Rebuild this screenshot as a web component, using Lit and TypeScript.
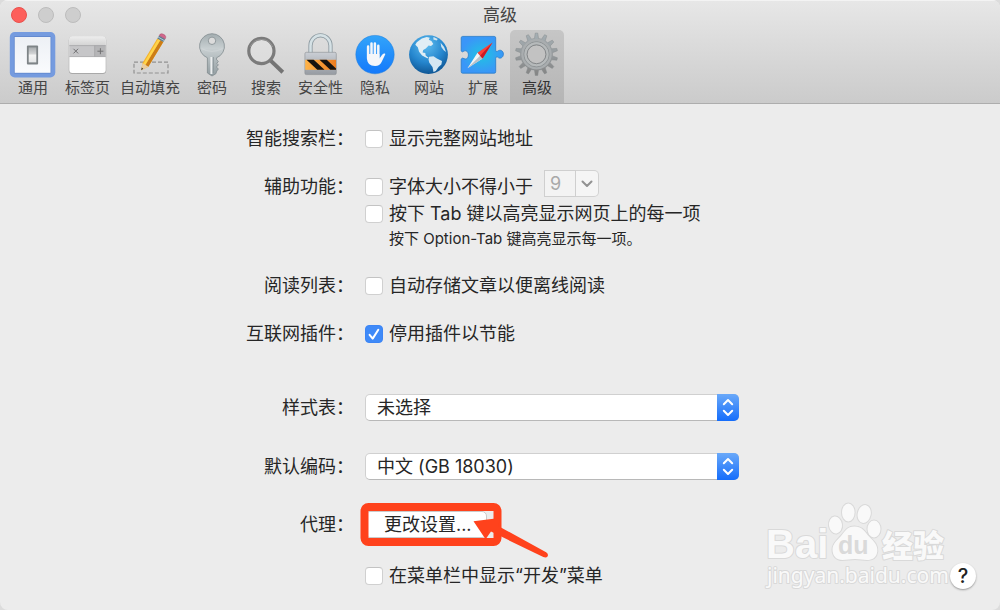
import { LitElement, html, css, svg, TemplateResult } from "lit";
import { customElement, property, state } from "lit/decorators.js";
import { classMap } from "lit/directives/class-map.js";

/** Outline of a toothed wheel, as path data. */
function gearPath(cx: number, cy: number, outer: number, inner: number, teeth: number): string {
  const step = (Math.PI * 2) / teeth;
  const pts: string[] = [];
  for (let i = 0; i < teeth; i++) {
    const a = i * step - Math.PI / 2;
    const spots: [number, number][] = [
      [inner, a - step * 0.28],
      [outer, a - step * 0.13],
      [outer, a + step * 0.13],
      [inner, a + step * 0.28],
    ];
    for (const [r, t] of spots) {
      pts.push(`${(cx + r * Math.cos(t)).toFixed(2)} ${(cy + r * Math.sin(t)).toFixed(2)}`);
    }
  }
  return `M${pts.join("L")}Z`;
}

const icons: Record<string, TemplateResult> = {
  general: svg`
    <defs><linearGradient id="g" x1="0" y1="0" x2="0" y2="1"><stop offset="0" stop-color="#edf0f5"/><stop offset="1" stop-color="#fafbfd"/></linearGradient>
    <linearGradient id="s" x1="0" y1="0" x2="0" y2="1"><stop offset="0" stop-color="#a9adb0"/><stop offset=".45" stop-color="#d5d7d8"/><stop offset=".5" stop-color="#f4f4f4"/><stop offset="1" stop-color="#e4e6e7"/></linearGradient></defs>
    <rect x="3.8" y="2" width="45.5" height="45.5" rx="5" fill="#759bdf"/>
    <rect x="7.9" y="6.2" width="37.3" height="37.3" rx="1" fill="#5d84ca"/>
    <rect x="8.7" y="7" width="35.8" height="35.8" fill="url(#g)"/>
    <rect x="20.9" y="15.6" width="11.2" height="18.8" rx="1" fill="#7e8487"/>
    <rect x="22.7" y="17.4" width="7.6" height="15" fill="url(#s)"/>`,
  tabs: svg`
    <defs><linearGradient id="t" x1="0" y1="0" x2="0" y2="1"><stop offset="0" stop-color="#ececec"/><stop offset="1" stop-color="#d3d3d3"/></linearGradient></defs>
    <rect x="7.8" y="7" width="37.4" height="37" rx="3.4" fill="#a9a9a9"/>
    <rect x="8.3" y="6.8" width="36.4" height="36.2" rx="3" fill="#fff"/>
    <path d="M8.300 15.6V10q0-3.200 3-3.200h30.4q3 0 3 3.200v5.600z" fill="url(#t)"/>
    <path d="M8.3 15.6h36.4v11H8.3z" fill="#c6c6c8"/><path d="M33.700 15.6h11v11h-11z" fill="#b5b5b7"/>
    <path d="M8.3 15.6h36.4M8.3 26.6h36.4M33.700 15.6v11" stroke="#a2a2a4" stroke-width=".8"/>
    <path d="M12.500 18.8l4.6 4.6m0-4.6l-4.6 4.6M36.4 21.2h6m-3-3v6" stroke="#707072" stroke-width="1" fill="none"/>`,
  autofill: svg`
    <rect x="11" y="32.2" width="34" height="10.8" fill="none" stroke="#929292" stroke-width="1.2" stroke-dasharray="4 2"/>
    <path d="M18.2 40.2l1.3-7.2L34.3 8.4l6 3.5-15 24.8z" fill="#f5b32c"/>
    <path d="M22.4 34.9L37.4 10.2l2.9 1.7-15 24.8z" fill="#cc7d17"/>
    <path d="M20.4 33.8L35.2 9.1l2 1.2-14.9 24.6z" fill="#ffd44a"/>
    <path d="M18.2 40.2l1.3-7.2 5.8 3.7z" fill="#e9cda0"/><path d="M18.2 40.2l.5-2.6 1.6 1.1z" fill="#333"/>
    <path d="M34.3 8.4l1.9-3 6 3.5-1.9 3z" fill="#5e7f91"/><path d="M35.1 7l6 3.5" stroke="#b6cbd5"/>
    <path d="M36.2 5.4c1.2-2 3-1.9 4.8-.8 1.7 1 2.3 2.4 1.2 4.3z" fill="#d1688c" stroke="#a94a6c" stroke-width=".5"/>`,
  passwords: svg`
    <defs><linearGradient id="k" x1="0" y1="0" x2="0" y2="1"><stop offset="0" stop-color="#a3adb0"/><stop offset=".35" stop-color="#c8cfd1"/><stop offset="1" stop-color="#929da1"/></linearGradient></defs>
    <path d="M27 3.7a12.5 12.5 0 0 1 4.600 24.100v2l1.800 1.700-1.600 1.800 1.600 1.600-2 2.100 2 2-1.600 2-1 2.800-3.800 2.200-4.600-3V27.800A12.500 12.500 0 0 1 27 3.700zm0 3.400a3.700 3.700 0 1 0 0 7.400 3.700 3.700 0 0 0 0-7.400z" fill="url(#k)" stroke="#818b8f" stroke-width=".8"/>
    <path d="M26.4 27v17" stroke="#eceeef" stroke-width="2"/><path d="M28.3 27v16" stroke="#899397" stroke-width=".9"/>
    <path d="M16.6 18.7Q27 24 37.4 18.7" stroke="#d9dedf" stroke-width=".8" fill="none" opacity=".6"/>`,
  search: svg`
    <path d="M31.4 30.4l12.4 11.8" stroke="#747474" stroke-width="4"/>
    <circle cx="22.4" cy="21" r="12.6" fill="#e2e2e2" fill-opacity=".55" stroke="#7b7b7b" stroke-width="3.2"/>
    <path d="M11 17a12.4 12.4 0 0 1 22.8 0" stroke="#959595" stroke-width="1" fill="none"/>`,
  security: svg`
    <defs><linearGradient id="l" x1="0" y1="0" x2="0" y2="1"><stop offset="0" stop-color="#cbcfd5"/><stop offset="1" stop-color="#969ba2"/></linearGradient>
    <linearGradient id="o"><stop offset="0" stop-color="#ffb449"/><stop offset="1" stop-color="#ed7d20"/></linearGradient></defs>
    <path d="M16.5 23v-7.5a10 10.2 0 0 1 20 0V23" fill="none" stroke="#8e9ba2" stroke-width="4.2"/>
    <path d="M16.5 23v-7.5a10 10.2 0 0 1 20 0V23" fill="none" stroke="#d5e1e5" stroke-width="2.5"/>
    <rect x="10.9" y="22.3" width="31.4" height="22.3" rx="1.5" fill="url(#l)" stroke="#898d92" stroke-width=".6"/>
    <path d="M11.2 29.8h30.8v10H11.2z" fill="url(#o)"/>
    <path d="M12.500 29.8h7.200l10.800 10h-7.200zM25.500 29.8h7.200l9.300 8.600v1.400h-5.700z" fill="#17130f"/>`,
  privacy: svg`
    <defs><linearGradient id="p" x1="0" y1="0" x2="0" y2="1"><stop offset="0" stop-color="#32a4fa"/><stop offset="1" stop-color="#1479fb"/></linearGradient></defs>
    <circle cx="27" cy="24.6" r="19.2" fill="url(#p)" stroke="#1b7ddd" stroke-width=".5"/>
    <g fill="#f4f6fa" stroke="#f4f6fa" stroke-linecap="round"><path d="M20.1 16.4v12M23.5 13.4v14M26.9 13.4v14M30.3 15.8v12" stroke-width="2.5"/>
    <path d="M19 24h12.4v4.6c1.7-1.8 2.6-4.4 4.5-5 1-.3 1.6.2 1.3 1L33.6 32c-1.3 2.5-3.2 4.1-6.5 4.1-5.2 0-8.1-2.7-8.1-8z" stroke="none"/></g>`,
  websites: svg`
    <defs><radialGradient id="w" cx=".45" cy=".25" r=".75"><stop offset="0" stop-color="#5fbdf0"/><stop offset=".6" stop-color="#2586ce"/><stop offset="1" stop-color="#105795"/></radialGradient></defs>
    <circle cx="26.5" cy="24.6" r="19.4" fill="url(#w)"/>
    <path d="M14.8 12.2l5-3.8 5-1.5 3 .8-1 2 2.6 1.2 1.9 3-2.3 2.2-2.4-.6-2.8 3-2.6 1.4-.6 2.5 2.7.6.4 2.5 3 2.4-1.4.3-5.2-2.8-3-3.7-1.3-4.5-2.5-2.5z" fill="#e1eef5"/>
    <path d="M27.2 26.8l4.3-.5 3.4 2.1 5.1 2.6-.6 3.4-2.9 2.5-2.7 4.2-2.3 1-1-5.1-3.2-4.3-.8-3.2z" fill="#d5e7f2"/>
    <path d="M38.6 12.8l3.5 4.1 2 5.1-2.4-1.7-2.4-3.4zM31.5 7.1l4.2 2-1 1.5-3.4-1.2z" fill="#cfe4f0"/>`,
  extensions: svg`
    <defs><radialGradient id="e"><stop offset="0" stop-color="#20c3e2"/><stop offset="1" stop-color="#3a96f8"/></radialGradient></defs>
    <path d="M6.7 6.4h31.5q1.5 0 1.5 1.5v12.4q0 2 2 .9c2.2-2.1 5.7-.6 5.7 2.9s-3.5 5.3-5.7 3q-2-1-2 1.2v13.4q0 1.5-1.500 1.500H6.700q-1.500 0-1.500-1.500V29.100q1.200-1.700 2.800-.5c2.500 1.400 4.400-.8 4.400-3.800s-2.300-5-4.700-3.500q-1.700 1.300-2.500-.4v-13q0-1.500 1.500-1.500z" fill="url(#e)" stroke="#277bc8" stroke-width=".8"/>
    <path d="M11.5 38.2l10-15.4 5.1 5.6z" fill="#f4f4f4"/><path d="M11.5 38.2l12.6-12.4 2.5 2.6z" fill="#b7c1c8"/>
    <path d="M36.5 12.6L21.5 22.8l5.1 5.6z" fill="#ff4038"/><path d="M36.5 12.6L24.1 25.7l2.5 2.7z" fill="#c91c24"/>`,
  advanced: svg`
    <defs><linearGradient id="a" x1="0" y1="0" x2="0" y2="1"><stop offset="0" stop-color="#a6b0b5"/><stop offset="1" stop-color="#848484"/></linearGradient></defs>
    <path d=${gearPath(26.5, 24.3, 21.2, 16, 14)} fill="url(#a)" stroke="#858a8d" stroke-width=".5" stroke-linejoin="round"/>
    <circle cx="26.5" cy="24.3" r="15.2" fill="#a9adaf"/>
    <circle cx="26.5" cy="24.3" r="12.6" fill="none" stroke="#8f9496" stroke-width="1"/>
    <circle cx="26.5" cy="24.3" r="11" fill="none" stroke="#b6babb" stroke-width="2"/>
    <circle cx="26.5" cy="24.3" r="9.4" fill="#c2c2c2" stroke="#85888a" stroke-width="1"/>`,
};

const tools: [string, string][] = [
  ["general", "通用"],
  ["tabs", "标签页"],
  ["autofill", "自动填充"],
  ["passwords", "密码"],
  ["search", "搜索"],
  ["security", "安全性"],
  ["privacy", "隐私"],
  ["websites", "网站"],
  ["extensions", "扩展"],
  ["advanced", "高级"],
];

@customElement("tool-button")
export class ToolButton extends LitElement {
  @property() icon = "";
  @property() label = "";
  @property({ type: Boolean }) current = false;

  static styles = css`
    :host { display: block; }
    .tool {
      display: flex;
      flex-direction: column;
      align-items: center;
      box-sizing: border-box;
      min-width: 54px;
      height: 73px;
      padding: 0 5px;
      border: 0;
      border-radius: 5px 5px 0 0;
      background: none;
      color: #454545;
      font: 15px/20px "Inter", "Noto Sans CJK SC", sans-serif;
      white-space: nowrap;
    }
    .current { background: linear-gradient(#c6c6c6, #b5b5b5); color: #333; }
    .icon { display: block; width: 54px; height: 48px; margin: 0 -5px; flex: none; }
  `;

  render() {
    return html`<button class=${classMap({ tool: true, current: this.current })} aria-pressed=${this.current}>
      <svg class="icon" viewBox="0 0 54 48" aria-hidden="true">${icons[this.icon]}</svg>
      <span>${this.label}</span>
    </button>`;
  }
}

@customElement("check-option")
export class CheckOption extends LitElement {
  @property() label = "";
  @property({ type: Boolean }) checked = false;

  static styles = css`
    :host { display: block; }
    .option { display: flex; align-items: center; gap: 6px; line-height: 27px; white-space: nowrap; }
    .mark { display: grid; flex: none; }
    .mark > * { grid-area: 1 / 1; }
    .box {
      appearance: none;
      width: 18px;
      height: 18px;
      margin: 0;
      border: 1px solid #d0d0d0;
      border-top-color: #c3c3c3;
      border-radius: 4px;
      background: #fff;
    }
    .box:checked { border-color: #3c85f5; background: #3f8af8; }
    .tick { width: 18px; height: 18px; pointer-events: none; visibility: hidden; }
    .box:checked + .tick { visibility: visible; }
  `;

  render() {
    return html`<label class="option">
      <span class="mark">
        <input class="box" type="checkbox" .checked=${this.checked} />
        <svg class="tick" viewBox="0 0 18 18" aria-hidden="true"><path d="M4.6 9.8l3.1 3.8 5.6-8.8" fill="none" stroke="#fff" stroke-width="2" stroke-linecap="round" stroke-linejoin="round"/></svg>
      </span>
      <span>${this.label}</span>
    </label>`;
  }
}

@customElement("app-root")
export class AppRoot extends LitElement {
  @state() private pane = "advanced";

  static styles = css`
    :host {
      display: block;
      min-height: 100vh;
      background: #dcdcdc;
      color: #262626;
      font: 18px/27px "Inter", "Noto Sans CJK SC", sans-serif;
    }
    .window {
      position: relative;
      box-sizing: border-box;
      min-height: 100vh;
      border-radius: 8px;
      background: #ececec;
      overflow: hidden;
    }
    .header {
      background: linear-gradient(#e7e7e7, #cbcbcb);
      border-bottom: 1px solid #adadad;
      box-shadow: inset 0 1px #f3f3f3;
    }
    .titlebar { display: grid; grid-template-columns: 1fr auto 1fr; align-items: center; height: 30px; padding: 0 11px; }
    .lights { display: flex; gap: 11px; }
    .light { box-sizing: border-box; width: 16px; height: 16px; padding: 0; border: 1px solid #bcbcbc; border-radius: 50%; background: #cecece; }
    .close { border-color: #e8514d; background: #fd5f5b; }
    .title { margin: 0; font-size: 17px; font-weight: 400; line-height: 26px; color: #454545; }
    .tools { display: flex; padding-left: 6px; }
    .form { display: flex; flex-direction: column; gap: 21px; padding: 21px 0; }
    .row { display: grid; grid-template-columns: 354fr 635fr; column-gap: 11px; }
    .name { text-align: right; white-space: nowrap; }
    .style { margin-top: 26px; }
    .encoding { margin-top: 11px; }
    .proxy { margin-top: 10px; }
    .menu { margin-top: 3px; }
    .last { display: flex; align-items: center; justify-content: space-between; padding-right: 24px; }
    .inline { display: flex; gap: 11px; height: 27px; }
    .combo { display: flex; height: 27px; margin-top: -3px; }
    .size { box-sizing: border-box; width: 32px; padding: 0 5px; border: 1px solid #cfcfcf; background: #f3f3f3; color: #a9a9a9; font: inherit; }
    .drop { display: grid; place-items: center; box-sizing: border-box; width: 23px; padding: 0; border: 1px solid #d2d2d2; border-left: 0; border-radius: 0 5px 5px 0; background: #f5f5f5; }
    .hint { margin: 0; padding-left: 24px; font-size: 15px; line-height: 24px; white-space: nowrap; }
    .select { display: grid; width: 374px; max-width: 100%; height: 27px; }
    .select > * { grid-area: 1 / 1; }
    .field {
      appearance: none;
      box-sizing: border-box;
      width: 100%;
      padding: 0 30px 0 11px;
      border: 1px solid #d0d0d0;
      border-bottom-color: #b8b8b8;
      border-radius: 5px;
      background: #fff;
      color: inherit;
      font: inherit;
      line-height: 24px;
    }
    .knob { justify-self: end; width: 22px; height: 27px; border-radius: 0 5px 5px 0; background: linear-gradient(#6aa9f9, #156dfb); pointer-events: none; }
    .change { position: relative; justify-self: start; }
    .push {
      display: block;
      box-sizing: border-box;
      width: 122px;
      height: 27px;
      padding: 0 0 0 18px;
      border: 1px solid #cacaca;
      border-radius: 5px;
      background: #fff;
      color: inherit;
      font: inherit;
      line-height: 24px;
      text-align: left;
      white-space: nowrap;
    }
    .callout { position: absolute; left: -5px; top: -9px; width: 190px; height: 56px; pointer-events: none; }
    .help {
      width: 26px;
      height: 26px;
      padding: 0;
      border: 0;
      border-radius: 50%;
      background: #fff;
      box-shadow: 0 1px 2px #999;
      color: #222;
      font: 500 20px/26px "Inter", sans-serif;
    }
    .watermark { position: absolute; right: 50px; bottom: 16px; width: 186px; height: 94px; pointer-events: none; }
    .ink { fill: #f9f9f9; stroke: #d9d9d9; stroke-width: 2px; paint-order: stroke; stroke-linejoin: round; }
    .latin { font: 700 40px "Liberation Sans", sans-serif; }
    .du { font: 700 25px "Liberation Sans", sans-serif; fill: #dadada; }
    .han { font: 900 31px "Noto Sans CJK SC", sans-serif; }
    .url { font: 400 21px "Noto Sans", sans-serif; }
  `;

  private select(id: string, value: string) {
    return html`<div class="select">
      <select class="field" id=${id}><option>${value}</option></select>
      <svg class="knob" viewBox="0 0 22 27" aria-hidden="true"><path d="M6.8 10.2L11 6l4.2 4.2M6.8 16.8L11 21l4.2-4.2" fill="none" stroke="#fff" stroke-width="2" stroke-linecap="round" stroke-linejoin="round"/></svg>
    </div>`;
  }

  render() {
    return html`<main class="window">
      <header class="header">
        <div class="titlebar">
          <div class="lights">
            <button class="light close" aria-label="关闭"></button>
            <button class="light" aria-label="最小化" disabled></button>
            <button class="light" aria-label="缩放" disabled></button>
          </div>
          <h1 class="title">高级</h1>
        </div>
        <nav class="tools">
          ${tools.map(
            ([id, label]) => html`<tool-button
              .icon=${id}
              .label=${label}
              .current=${this.pane === id}
              @click=${() => (this.pane = id)}
            ></tool-button>`
          )}
        </nav>
      </header>

      <form class="form" @submit=${(e: Event) => e.preventDefault()}>
        <div class="row">
          <span class="name">智能搜索栏：</span>
          <check-option label="显示完整网站地址"></check-option>
        </div>
        <div class="row">
          <span class="name">辅助功能：</span>
          <div>
            <div class="inline">
              <check-option label="字体大小不得小于"></check-option>
              <div class="combo">
                <input class="size" aria-label="最小字体大小" value="9" disabled />
                <button class="drop" type="button" aria-label="选择大小" disabled>
                  <svg width="12" height="8" viewBox="0 0 12 8"><path d="M1.5 1.5L6 6l4.5-4.5" fill="none" stroke="#929292" stroke-width="2" stroke-linecap="round" stroke-linejoin="round"/></svg>
                </button>
              </div>
            </div>
            <check-option label="按下 Tab 键以高亮显示网页上的每一项"></check-option>
            <p class="hint">按下 Option-Tab 键高亮显示每一项。</p>
          </div>
        </div>
        <div class="row">
          <span class="name">阅读列表：</span>
          <check-option label="自动存储文章以便离线阅读"></check-option>
        </div>
        <div class="row">
          <span class="name">互联网插件：</span>
          <check-option label="停用插件以节能" checked></check-option>
        </div>
        <div class="row style">
          <label class="name" for="sheet">样式表：</label>
          ${this.select("sheet", "未选择")}
        </div>
        <div class="row encoding">
          <label class="name" for="encoding">默认编码：</label>
          ${this.select("encoding", "中文 (GB 18030)")}
        </div>
        <div class="row proxy">
          <span class="name">代理：</span>
          <div class="change">
            <button class="push" type="button">更改设置...</button>
            <svg class="callout" viewBox="0 0 190 56" aria-hidden="true">
              <rect x="4.5" y="5" width="133" height="35" rx="4" fill="none" stroke="#ff421c" stroke-width="8"/>
              <path d="M113.5 19.2L139.5 16l-.8 8.2 47.4 26.1q2.8 2 1.4 4.2-1.2 1.8-4.2.6L131 29.6l-5.4 7.6z" fill="#ff421c"/>
            </svg>
          </div>
        </div>
        <div class="row menu">
          <span></span>
          <div class="last">
            <check-option label="在菜单栏中显示“开发”菜单"></check-option>
            <button class="help" type="button" aria-label="帮助">?</button>
          </div>
        </div>
      </form>

      <svg class="watermark" viewBox="0 0 186 94" aria-hidden="true">
        <text class="ink latin" x="2" y="58">Bai</text>
        <g class="ink">
          <ellipse cx="71.5" cy="25" rx="6.5" ry="8.5" transform="rotate(-8 71.5 25)"/>
          <ellipse cx="84.3" cy="12.5" rx="6.3" ry="9"/>
          <ellipse cx="100.2" cy="14" rx="6.5" ry="9" transform="rotate(12 100.2 14)"/>
          <ellipse cx="110" cy="29" rx="6.5" ry="8.5"/>
          <path d="M90.5 26.5c8 0 10.8 6 14.5 10 4.5 4.6 9 8.5 8.3 15-.8 6.5-5.3 8.5-10.3 8.5-4.5 0-7-1-12-1s-8 1-12.5 1c-6 0-10-4-10-10.5 0-6 5-9.5 8.5-13.5 4-4.5 6-9.5 13.500-9.500z"/>
        </g>
        <text class="du" x="74" y="54">du</text>
        <text class="ink han" x="118" y="57">经验</text>
        <text class="ink url" x="3" y="83">jingyan.baidu.com</text>
      </svg>
    </main>`;
  }
}
